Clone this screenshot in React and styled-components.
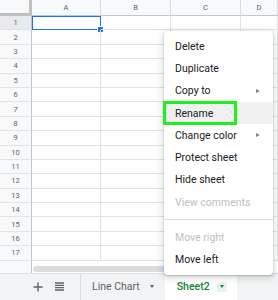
import React from 'react';
import styled, { createGlobalStyle } from 'styled-components';

const GlobalStyle = createGlobalStyle`
  html, body { margin: 0; padding: 0; background: #fff; }
  body { font-family: Roboto, "Liberation Sans", Arial, sans-serif; overflow: hidden; }
`;

const Page = styled.div`
  position: relative;
  width: 278px;
  height: 300px;
  overflow: hidden;
  display: flex;
  flex-direction: column;
`;

const Grid = styled.div`
  display: grid;
  grid-template-columns: 32px 69px 70px 70px 1fr;
  grid-template-rows: 16px repeat(17, 14.4px);
`;

const Corner = styled.div`
  background: #f8f9fa;
  border-right: 3px solid #c0c0c0;
  border-bottom: 3px solid #c0c0c0;
  box-sizing: border-box;
`;

const ColHead = styled.div`
  background: #f8f9fa;
  border-right: 1px solid #dadce0;
  border-bottom: 1px solid #c4c7c5;
  box-sizing: border-box;
  display: flex;
  align-items: center;
  justify-content: center;
  font-size: 7.5px;
  color: #5f6368;
`;

const RowHead = styled.div`
  background: ${(p) => (p.$active ? '#e8eaed' : '#f8f9fa')};
  border-right: 1px solid #c4c7c5;
  border-bottom: 1px solid #e2e3e3;
  box-sizing: border-box;
  display: flex;
  align-items: center;
  justify-content: center;
  font-size: 7.5px;
  color: #5f6368;
`;

const Cell = styled.div`
  position: relative;
  border-right: 1px solid #e2e3e3;
  border-bottom: 1px solid #e2e3e3;
  box-sizing: border-box;
  ${(p) => p.$selected && `
    border: 1.5px solid #1a73e8;
  `}
`;

const Handle = styled.span`
  position: absolute;
  right: -3.5px;
  bottom: -3.5px;
  width: 5px;
  height: 5px;
  background: #1a73e8;
  border: 1px solid #fff;
  box-sizing: content-box;
`;

const ScrollStrip = styled.div`
  display: flex;
  height: 12px;
`;

const StripGutter = styled.div`
  width: 32px;
  background: #f8f9fa;
  border-right: 1px solid #c4c7c5;
  box-sizing: border-box;
`;

const Track = styled.div`
  flex: 1;
  display: flex;
  align-items: flex-end;
  padding: 0 0 1px 1px;
`;

const Thumb = styled.div`
  width: 240px;
  height: 6px;
  border-radius: 3px;
  background: #dadce0;
`;

const TabBar = styled.div`
  flex: 1;
  display: flex;
  align-items: stretch;
  padding-left: 30px;
  background: #f1f3f4;
  border-top: 1px solid #e0e0e0;
`;

const IconBtn = styled.div`
  width: ${(p) => p.$w}px;
  display: flex;
  align-items: center;
  justify-content: center;
  color: #5f6368;
`;

const Divider = styled.div`
  width: 1px;
  background: #dadce0;
  margin-left: 8px;
`;

const Tab = styled.div`
  display: flex;
  align-items: center;
  gap: 7px;
  padding: 0 ${(p) => (p.$active ? '10px' : '8px')} 0 ${(p) => (p.$active ? '12px' : '11px')};
  background: ${(p) => (p.$active ? '#fff' : 'transparent')};
  color: ${(p) => (p.$active ? '#188038' : '#5f6368')};
  font-size: 10.5px;
  font-weight: ${(p) => (p.$active ? 500 : 400)};
`;

const Caret = styled.span`
  display: inline-flex;
  align-items: center;
  justify-content: center;
  width: 10px;
  height: 10px;
  border-radius: 2px;
  background: ${(p) => (p.$active ? '#e6f4ea' : 'transparent')};
  &::after {
    content: '';
    border-left: 2.5px solid transparent;
    border-right: 2.5px solid transparent;
    border-top: 3px solid ${(p) => (p.$active ? '#188038' : '#5f6368')};
  }
`;

const Menu = styled.div`
  position: absolute;
  left: 164px;
  top: 31px;
  width: 109px;
  padding: 4px 0;
  background: #fff;
  border-radius: 4px;
  box-shadow: 0 2px 6px 2px rgba(60, 64, 67, 0.15), 0 1px 2px rgba(60, 64, 67, 0.3);
  box-sizing: border-box;
`;

const Item = styled.div`
  position: relative;
  height: 22.3px;
  display: flex;
  align-items: center;
  justify-content: space-between;
  padding: 0 13px 0 11px;
  font-size: 10.5px;
  color: ${(p) => (p.$disabled ? '#bdc1c6' : '#202124')};
  background: ${(p) => (p.$hover ? '#f1f1f1' : 'transparent')};
`;

const Arrow = styled.span`
  width: 0;
  height: 0;
  border-top: 2.5px solid transparent;
  border-bottom: 2.5px solid transparent;
  border-left: 4px solid #80868b;
`;

const Highlight = styled.span`
  position: absolute;
  left: -1px;
  top: -1px;
  width: 74px;
  height: 24px;
  border: 3px solid #1cf21c;
  box-sizing: border-box;
`;

const Separator = styled.div`
  height: 1px;
  background: #dadce0;
  margin: 6px 0;
`;

const cols = ['A', 'B', 'C', 'D'];
const rows = Array.from({ length: 17 }, (_, i) => i + 1);

const items = [
  { label: 'Delete' },
  { label: 'Duplicate' },
  { label: 'Copy to', sub: true },
  { label: 'Rename', hover: true },
  { label: 'Change color', sub: true },
  { label: 'Protect sheet' },
  { label: 'Hide sheet' },
  { label: 'View comments', disabled: true },
];

export default function App() {
  return (
    <Page>
      <GlobalStyle />
      <Grid>
        <Corner />
        {cols.map((c) => (
          <ColHead key={c}>{c}</ColHead>
        ))}
        {rows.map((r) => (
          <React.Fragment key={r}>
            <RowHead $active={r === 1}>{r}</RowHead>
            {cols.map((c) => (
              <Cell key={c} $selected={r === 1 && c === 'A'}>
                {r === 1 && c === 'A' && <Handle />}
              </Cell>
            ))}
          </React.Fragment>
        ))}
      </Grid>
      <ScrollStrip>
        <StripGutter />
        <Track>
          <Thumb />
        </Track>
      </ScrollStrip>
      <TabBar>
        <IconBtn $w={16}>
          <svg width="10" height="10" viewBox="0 0 10 10">
            <path d="M5 0.5v9M0.5 5h9" stroke="#5f6368" strokeWidth="1.4" />
          </svg>
        </IconBtn>
        <IconBtn $w={26}>
          <svg width="9" height="9" viewBox="0 0 9 9">
            <path d="M0 1h9M0 3.3h9M0 5.6h9M0 8h9" stroke="#5f6368" strokeWidth="1.3" />
          </svg>
        </IconBtn>
        <Divider />
        <Tab>
          Line Chart
          <Caret />
        </Tab>
        <Tab $active>
          Sheet2
          <Caret $active />
        </Tab>
      </TabBar>
      <Menu>
        {items.map((it) => (
          <Item key={it.label} $disabled={it.disabled} $hover={it.hover}>
            {it.label}
            {it.sub && <Arrow />}
            {it.hover && <Highlight />}
          </Item>
        ))}
        <Separator />
        <Item $disabled>Move right</Item>
        <Item>Move left</Item>
      </Menu>
    </Page>
  );
}
